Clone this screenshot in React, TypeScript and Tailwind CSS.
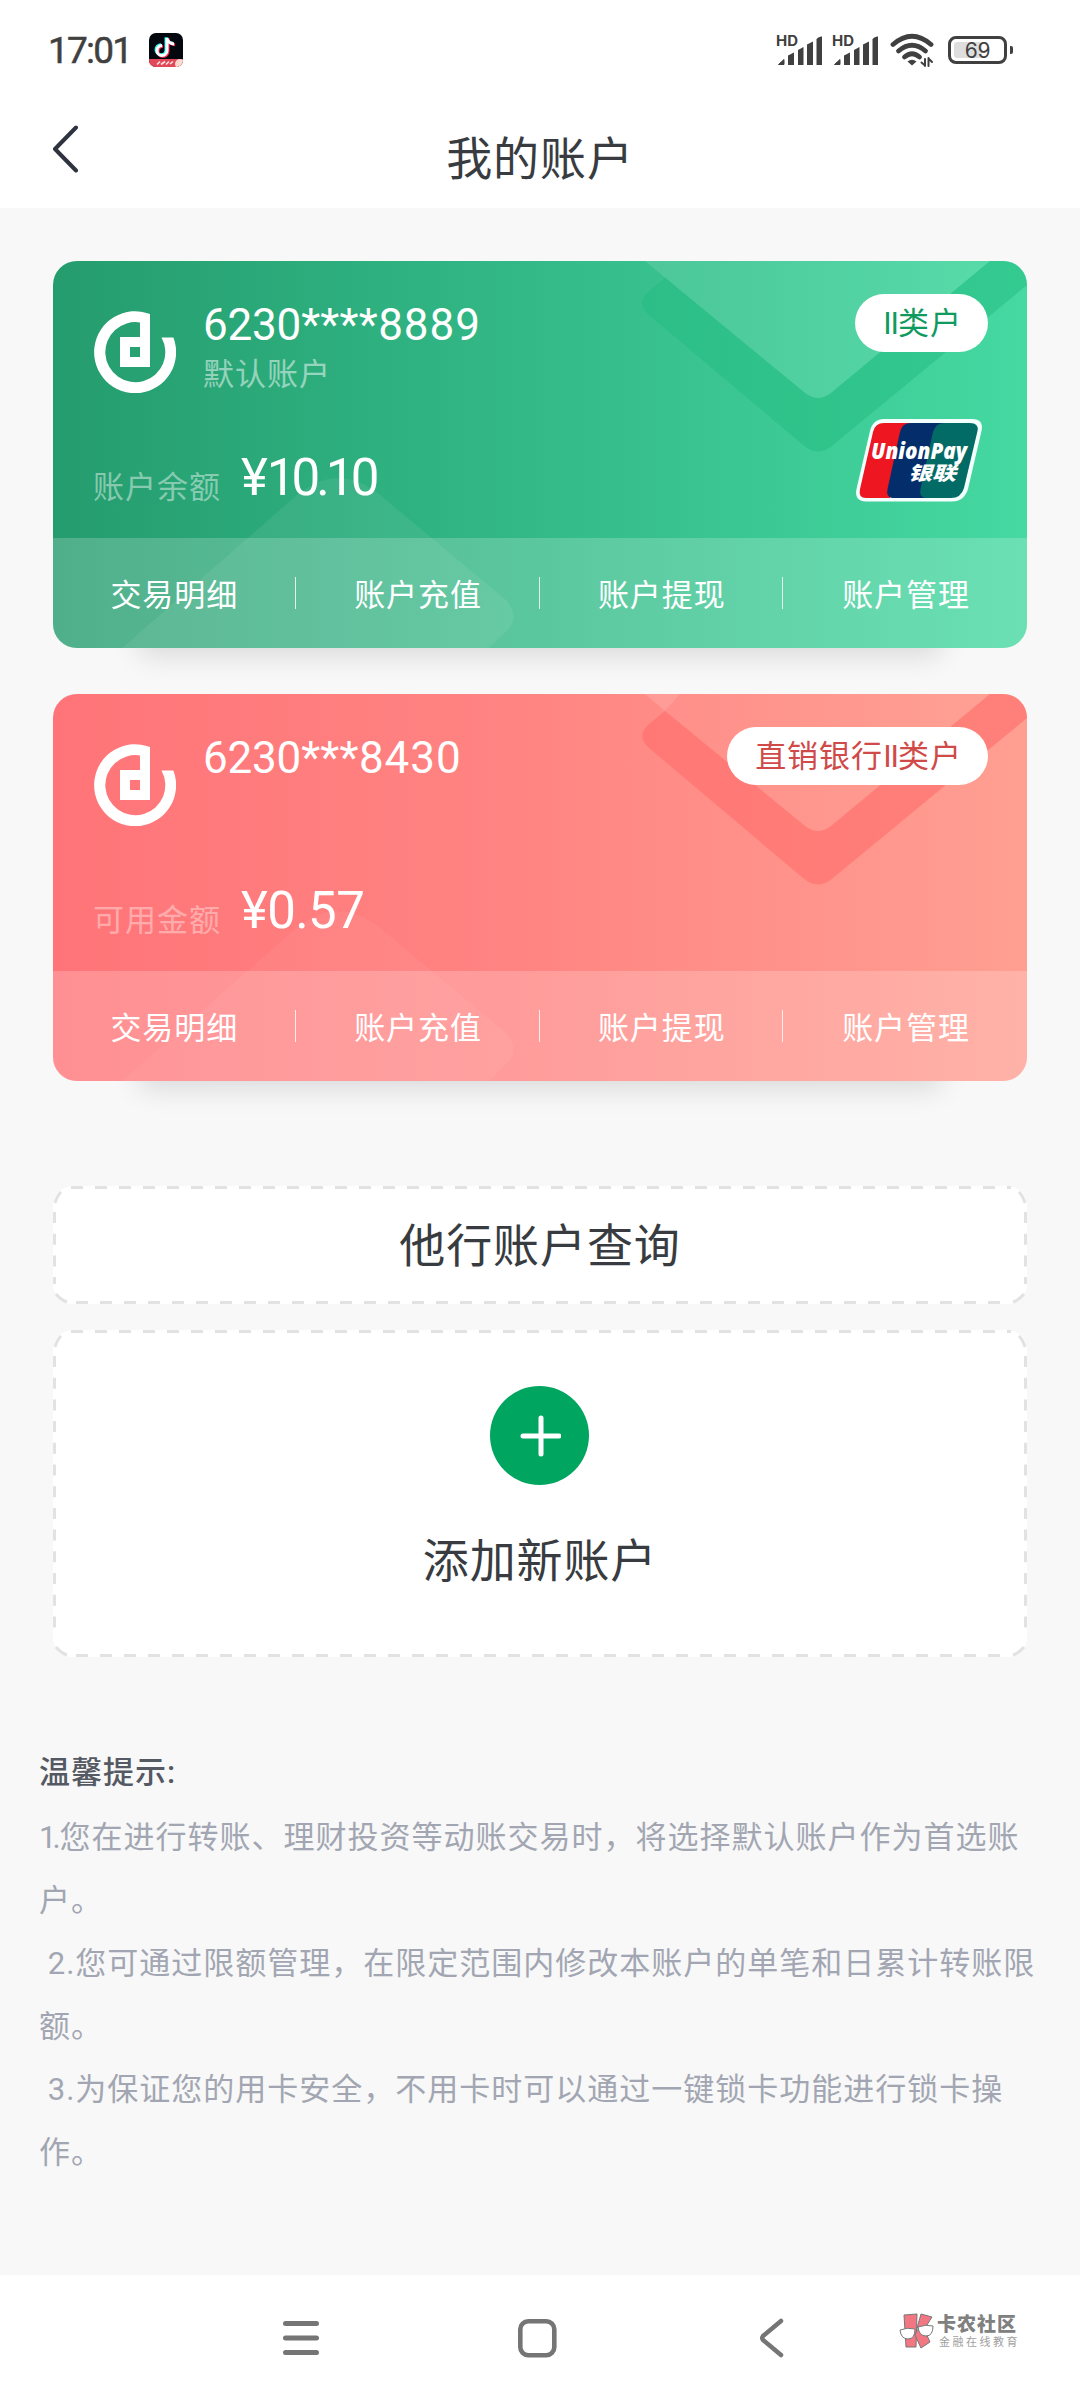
import clsx from "clsx";

interface Account {
  id: string;
  head: string;
  stars: string;
  tail: string;
  note?: string;
  label: string;
  amount: React.ReactNode;
  tagPrefix?: string;
  theme: "green" | "red";
  unionPay?: boolean;
}

const accounts: Account[] = [
  {
    id: "main",
    head: "6230",
    stars: "****",
    tail: "8889",
    note: "默认账户",
    label: "账户余额",
    amount: (
      <>
        <span className="-tracking-[1px]">¥</span>
        <span className="-tracking-[3.900px]">10.10</span>
      </>
    ),
    theme: "green",
    unionPay: true,
  },
  {
    id: "direct",
    head: "6230",
    stars: "***",
    tail: "8430",
    label: "可用金额",
    amount: <span className="-tracking-[0.6px]">¥0.57</span>,
    tagPrefix: "直销银行",
    theme: "red",
  },
];

const actions = ["交易明细", "账户充值", "账户提现", "账户管理"];

function Signal() {
  return (
    <svg width="48" height="34" viewBox="0 0 48 34" fill="#404040">
      <text x="0" y="13" fontSize="14" fontWeight="700" fontFamily="Inter, sans-serif" textLength="22" lengthAdjust="spacingAndGlyphs">
        HD
      </text>
      <path d="M2.500 31.500 L8 26.500 V31.500 Z" stroke="#404040" strokeLinejoin="round" strokeWidth="1" />
      <path d="M12 22.5 L18 19.5 V32 H12 Z" />
      <path d="M22 17 L27.500 14 V32 H22 Z" />
      <path d="M31 11.500 L37 8.500 V32 H31 Z" />
      <path d="M40.500 6 Q43 3 46 3.500 V32 H40.500 Z" />
    </svg>
  );
}

function Wifi() {
  return (
    <svg width="44" height="34" viewBox="0 0 44 34" fill="none" stroke="#404040" strokeWidth="4.800" strokeLinecap="round">
      <path d="M3 11.500 Q22 -5 41 11.500" />
      <path d="M8.500 18 Q22 6.500 35.500 18" />
      <path d="M14.500 24 Q22 17.500 29.500 24" />
      <path d="M17.500 28.500 Q22 25 26.500 28.500 L22 32.500 Z" fill="#404040" stroke="none" />
      <path d="M35 33 V26 M31.500 29.500 L35 32.500 M38.500 25 V33 M38.500 25.500 L42 29" strokeWidth="2" />
    </svg>
  );
}

function Battery() {
  return (
    <div className="flex items-center gap-[3px]">
      <div className="flex h-[28px] w-[59px] rounded-[8px] border-[3px] border-[#404040] p-[3px]">
        <div className="flex w-full items-center justify-center rounded-[3px] bg-linear-to-r from-[#dedede] from-60% to-white to-60% text-[21px] leading-none -tracking-[0.2px] text-[#404040] font-[Inter,sans-serif]">
          69
        </div>
      </div>
      <div className="h-[8px] w-[3px] rounded-r-[2px] bg-[#404040]" />
    </div>
  );
}

function TikTok() {
  const note = "M18 5 V17.500 A5 5 0 1 1 13 12.500 M18 5 Q19 10.500 25 11";
  return (
    <svg width="34" height="34" viewBox="0 0 34 34" fill="none" className="ml-[21px] overflow-hidden rounded-[7px]">
      <rect width="34" height="34" fill="#05070f" />
      <path d={note} stroke="#25f4ee" strokeWidth="3" transform="translate(-1 -.8)" />
      <path d={note} stroke="#fe2c55" strokeWidth="3" transform="translate(1 .8)" />
      <path d={note} stroke="#fff" strokeWidth="3" />
      <path d="M0 26 H34 V34 H0 Z" fill="#e2475a" />
      <circle cx="31" cy="31" r="5" fill="#ffd9cf" />
      <path d="M8 31.500 L11 28.500 M12 31.500 L16 28.500 M17 31.500 L20 28.500 M21 31 L24 28.500" stroke="#ffe3df" strokeWidth="1.600" />
    </svg>
  );
}

function BankLogo() {
  return (
    <svg width="82" height="82" viewBox="0 0 82 82" className="shrink-0">
      <path
        fill="#fff"
        fillRule="evenodd"
        d="M56 3 V56 H26 V26 H46 V11.500 A30 30 0 1 0 67.500 26.500 H79.400 A41 41 0 1 1 56 3 Z M36 36 V46 H46 V36 Z"
      />
    </svg>
  );
}

function UnionPay() {
  return (
    <svg width="126" height="83" viewBox="0 0 126 83" className="overflow-visible">
      <path d="M28 0 H116 Q128 0 125.500 12 L112 70 Q108 82.500 96 82.500 H10 Q-2 82 .500 70 L14 12 Q17 0 28 0 Z" fill="#f3fffd" />
      <path d="M28 4 H56 L34 79 H10 Q2 79 4 70 L17 13 Q19 4 28 4 Z" fill="#ee1620" />
      <path d="M55 4 H90 L70 79 H36 Q30 78 31.500 70 L44 13 Q46 4 55 4 Z" fill="#042d6b" />
      <path d="M88 4 H114 Q123 4 121.500 12 L108 69 Q105 79 95 79 H69 Q63 78 64.500 70 L77 13 Q80 4 88 4 Z" fill="#036b66" />
      <g fill="#fff" fontStyle="italic">
        <text x="15" y="40" fontSize="22.500" fontWeight="800" fontFamily="Open Sans, sans-serif" textLength="96" lengthAdjust="spacingAndGlyphs">
          UnionPay
        </text>
        <text x="52" y="61" fontSize="19" fontWeight="900" fontFamily="Noto Sans CJK SC, sans-serif" textLength="48" lengthAdjust="spacingAndGlyphs">
          银联
        </text>
      </g>
    </svg>
  );
}

// Folded-ribbon watermark behind the card content
function CardPattern({ red }: { red: boolean }) {
  return (
    <svg className="absolute inset-0" width="974" height="387" viewBox="0 0 974 387">
      <path d="M592 0 L752 132 Q765 142 778 132 L937 0 Z" fill="#fff" opacity={red ? 0.03 : 0.1} />
      <path d="M592 0 H627 L612 17 Z" fill="#fff" opacity={red ? 0.12 : 0.02} />
      <path
        d="M612 17 L595 31 Q583 43 596 54 L750 184 Q765 197 780 184 L974 24 V0 H937 L778 132 Q765 142 752 132 Z"
        fill={red ? "#ff6c6b" : "#22bb80"}
        opacity={red ? 0.6 : 0.5}
      />
      <path d="M69 387 L238 239 Q283 198 327 234 L453 339 Q466 354 457 366 L436 387 Z" fill="#fff" opacity={red ? 0.05 : 0.07} />
    </svg>
  );
}

function AccountCard({ account }: { account: Account }) {
  const red = account.theme === "red";
  return (
    <section
      className={clsx(
        "relative flex h-[387px] flex-col overflow-hidden rounded-[24px] bg-linear-to-r text-white",
        red ? "from-[#ff7478] via-[#ff8583] to-[#ff9f92]" : "from-[#259c6e] via-[#33ba88] to-[#46d9a2]",
      )}
    >
      <CardPattern red={red} />
      <div className="relative flex h-[277px] justify-between pr-[39px] pl-[41px]">
        <div className="flex flex-col">
          <div className="flex h-[190px] gap-[27px] pt-[50px]">
            <BankLogo />
            <div className="-mt-[12px] flex flex-col">
              <p className="text-[44px] leading-[52px]">
                <span className="-tracking-[0.2px]">{account.head}</span>
                <span className="tracking-[0.3px]">{account.stars}</span>
                <span className="tracking-[1px]">{account.tail}</span>
              </p>
              {account.note && <p className="mt-[2px] text-[31px] leading-[44px] tracking-[1px] text-white/50">{account.note}</p>}
            </div>
          </div>
          <div className="-mt-px flex items-center gap-[20px]">
            <span className={clsx("mt-[16px] -ml-px text-[31px] leading-[44px] tracking-[1px]", red ? "text-white/40" : "text-white/45")}>
              {account.label}
            </span>
            <span className="-mt-[4px] text-[51px] leading-[56px]">{account.amount}</span>
          </div>
        </div>
        <div className="flex flex-col items-end pt-[33px]">
          <div
            className={clsx(
              "flex h-[58px] items-center rounded-full bg-white pt-px pr-[26px] pl-[28px] text-[31px] leading-none tracking-[1px]",
              red ? "text-[#cf4a48]" : "text-[#0f9b60]",
            )}
          >
            <span>{account.tagPrefix}</span>
            <span className="-tracking-[1px]">II</span>
            <span>类户</span>
          </div>
          {account.unionPay && (
            <div className="mt-[67px] mr-[6px]">
              <UnionPay />
            </div>
          )}
        </div>
      </div>
      <div className="relative -ml-px grid h-[110px] grid-cols-4 items-center bg-white/20">
        {actions.map((action, i) => (
          <div
            key={action}
            className={clsx(
              "flex h-[32px] items-center justify-center pt-[5px] pl-[2px] text-[31px] leading-none tracking-[1px]",
              i < 3 && "border-r border-white/80",
            )}
          >
            {action}
          </div>
        ))}
      </div>
    </section>
  );
}

function DashedBox({ height, className, children }: { height: number; className: string; children: React.ReactNode }) {
  const bottom = height - 1.5;
  return (
    <div className={clsx("relative flex flex-col items-center rounded-[20px] bg-white", className)}>
      <svg className="absolute inset-0" width="974" height={height} fill="none" stroke="#e2e2e2" strokeWidth="3">
        <path d="M18 1.500 H958" strokeDasharray="12 12" />
        <path d={`M23 ${bottom} H952`} strokeDasharray="12 12" />
        <path d={`M1.500 26 V${height - 20} M972.500 26 V${height - 20}`} strokeDasharray="11 10.700" />
        <path d={`M2 17 Q4 10 8 6 M972 17 Q970 10 966 6 M3 ${height - 10} Q8 ${height - 4} 14 ${height - 2} M971 ${height - 10} Q966 ${height - 4} 960 ${height - 2}`} />
      </svg>
      {children}
    </div>
  );
}

function CommunityMark() {
  return (
    <div className="mt-px flex gap-[2px]">
      <svg width="36" height="38" viewBox="0 0 36 38" fill="#f27783" stroke="#777" strokeWidth="1">
        <path d="M5 2 L18 1 L17 34 L7 34 Z" />
        <path d="M22 1 L33 4 L26 15 L18 15 Z" />
        <path d="M18 17 L25 16 L31 29 L22 35 L16 22 Z" />
        <path d="M1 17 Q8 14 16 16 Q16 26 9 26 Q2 26 1 17 Z" fill="#fff" />
        <path d="M19 14 Q27 11 34 13 Q34 23 27 23 Q20 23 19 14 Z" fill="#fff" />
      </svg>
      <div className="pt-[2px]">
        <p className="text-[19px] leading-[19px] font-black tracking-[1px] text-[#808080]">卡农社区</p>
        <p className="mt-[2px] pl-[2px] text-[11px] leading-[14px] tracking-[2.500px] text-[#a0a0a0]">金融在线教育</p>
      </div>
    </div>
  );
}

export default function App() {
  return (
    <div className="flex h-[2400px] w-[1080px] flex-col bg-[#f8f8f8] font-[Roboto,'Noto_Sans_CJK_SC',sans-serif]">
      <header className="h-[208px] bg-white">
        <div className="flex h-[100px] items-center justify-between pr-[67px] pl-[48px]">
          <div className="flex items-center">
            <span className="w-[80px] text-[37px] leading-none -tracking-[1.800px] whitespace-nowrap text-[#404040] [-webkit-text-stroke:0.5px_#404040]">
              17:01
            </span>
            <TikTok />
          </div>
          <div className="flex items-center">
            <Signal />
            <span className="w-[8px]" />
            <Signal />
            <span className="w-[10px]" />
            <Wifi />
            <span className="w-[14px]" />
            <Battery />
          </div>
        </div>
        <div className="grid h-[108px] grid-cols-[100px_1fr_100px]">
          <svg className="mt-[25px] ml-[51px]" width="28" height="48" fill="none" stroke="#2f333f" strokeWidth="4" strokeLinecap="round" strokeLinejoin="round">
            <path d="M25 2.500 L4 24 L25 45.500" />
          </svg>
          <h1 className="pt-[25px] text-center text-[46px] leading-[68px] tracking-[0.900px] text-[#383c40]">我的账户</h1>
        </div>
      </header>

      <main className="flex-1 pt-[53px]">
        <div className="flex flex-col gap-[46px] px-[53px]">
          {accounts.map((account) => (
            <div key={account.id} className="rounded-[24px] shadow-[0_94px_26px_-86px_rgba(0,0,0,0.12)]">
              <AccountCard account={account} />
            </div>
          ))}
        </div>

        <div className="mt-[105px] flex flex-col gap-[26px] px-[53px] text-[46px] leading-[68px] tracking-[0.900px] text-[#383c40]">
          <DashedBox height={118} className="h-[118px] pt-[26px]">
            他行账户查询
          </DashedBox>
          <DashedBox height={327} className="h-[327px] pt-[56px]">
            <div className="mr-px flex size-[99px] items-center justify-center rounded-full bg-[#00a660]">
              <svg width="42" height="42" stroke="#fff" strokeWidth="5" strokeLinecap="round">
                <path d="M22 3 V39 M4 21 H40" />
              </svg>
            </div>
            <p className="mt-[42px]">添加新账户</p>
          </DashedBox>
        </div>

        <div className="mt-[84px] pr-[38px] pl-[39px] text-[31px] leading-[63px] tracking-[1px] whitespace-pre-wrap text-[#a2a6b2]">
          <h2 className="mb-[2px] font-medium text-[#555963]">温馨提示:</h2>
          <p>
            <span className="-tracking-[4px] pr-[3px]">1.</span>您在进行转账、理财投资等动账交易时，将选择默认账户作为首选账户。
          </p>
          <p> 2.您可通过限额管理，在限定范围内修改本账户的单笔和日累计转账限额。</p>
          <p> 3.为保证您的用卡安全，不用卡时可以通过一键锁卡功能进行锁卡操作。</p>
        </div>
      </main>

      <nav className="flex h-[125px] bg-white pt-[37px] pl-[282px]">
        <svg className="mt-[5px]" width="38" height="42" stroke="#757575" strokeWidth="5" strokeLinecap="round">
          <path d="M3.500 6.500 H34.500 M3.500 21 H34.500 M3.500 35.500 H34.500" />
        </svg>
        <svg className="mt-[6px] ml-[197px]" width="40" height="40" fill="none" stroke="#757575" strokeWidth="4.600">
          <rect x="3.300" y="3.300" width="34" height="34" rx="8" />
        </svg>
        <svg className="mt-[6px] ml-[202px]" width="28" height="40" fill="none" stroke="#757575" strokeWidth="4.500" strokeLinecap="round" strokeLinejoin="round">
          <path d="M22 3 L4 18 Q2.500 20 4 22 L22 37" />
        </svg>
        <div className="ml-[112px]">
          <CommunityMark />
        </div>
      </nav>
    </div>
  );
}
